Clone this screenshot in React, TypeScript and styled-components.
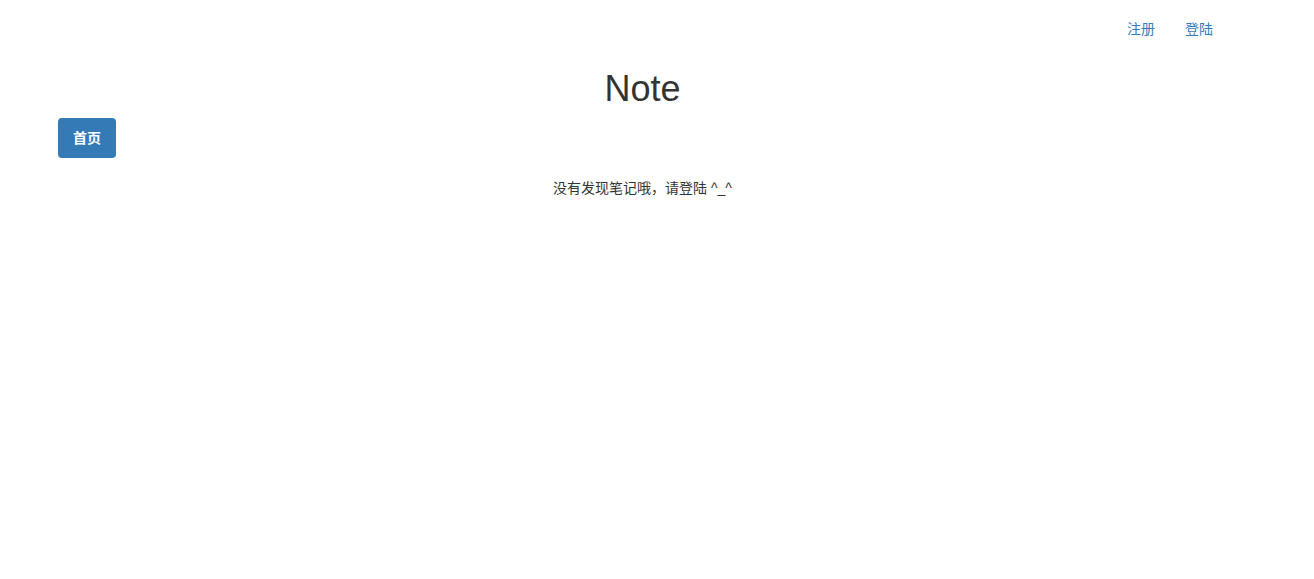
import React from 'react';
import styled, { createGlobalStyle } from 'styled-components';

const GlobalStyle = createGlobalStyle`
  html, body {
    margin: 0;
    padding: 0;
    background: #fff;
  }
  body {
    font-family: "Liberation Sans", "Noto Sans CJK SC", sans-serif;
    font-size: 14px;
    line-height: 20px;
    color: #333;
  }
`;

const Page = styled.div`
  padding: 0 87px 0 58px;
`;

const TopNav = styled.nav`
  display: flex;
  justify-content: flex-end;
  padding-top: 9px;
  margin-right: -1px;
`;

const NavLink = styled.a`
  display: block;
  padding: 10px 15px;
  color: #337ab7;
  text-decoration: none;
  cursor: pointer;
`;

const Title = styled.h1`
  margin: 20px 0 0;
  font-size: 36px;
  font-weight: 500;
  line-height: 1.1;
  text-align: center;
  color: #333;
`;

const Pills = styled.ul`
  display: flex;
  list-style: none;
  margin: 9px 0 0;
  padding: 0;
`;

const Pill = styled.a<{ $active?: boolean }>`
  display: block;
  padding: 10px 15px;
  border-radius: 4px;
  font-weight: bold;
  text-decoration: none;
  color: ${(p) => (p.$active ? '#fff' : '#337ab7')};
  background: ${(p) => (p.$active ? '#337ab7' : 'transparent')};
`;

const Empty = styled.p`
  margin: 20px 0 0;
  text-align: center;
`;

const App: React.FC = () => {
  return (
    <>
      <GlobalStyle />
      <Page>
        <TopNav>
          <NavLink>注册</NavLink>
          <NavLink>登陆</NavLink>
        </TopNav>
        <Title>Note</Title>
        <Pills>
          <li>
            <Pill $active>首页</Pill>
          </li>
        </Pills>
        <Empty>没有发现笔记哦，请登陆 ^_^</Empty>
      </Page>
    </>
  );
};

export default App;
